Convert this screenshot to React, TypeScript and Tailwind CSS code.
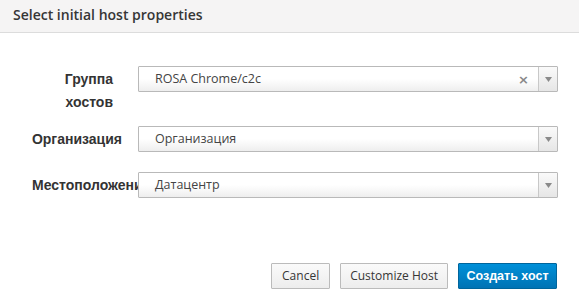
import React from 'react';

const Arrow = () => (
  <div className="flex h-full w-[19px] items-center justify-center border-l border-[#c8c8c8] bg-gradient-to-b from-[#fafafa] to-[#e6e6e6]">
    <svg width="7" height="5" viewBox="0 0 7 5">
      <path d="M0 0 L7 0 L3.5 5 Z" fill="#8a8a8a" />
    </svg>
  </div>
);

const Select = ({ value, clearable }: { value: string; clearable?: boolean }) => (
  <div className="flex h-[26px] w-[420px] shrink-0 items-center rounded-[1px] border border-[#b9b9b9] bg-gradient-to-b from-white via-white to-[#eeeeee]">
    <span className="flex-1 pl-4 text-[12.5px] text-[#444] font-['Open_Sans',sans-serif]">{value}</span>
    {clearable && (
      <span className="mr-[9px] text-[13px] font-bold leading-none text-[#888] font-['DejaVu_Sans',sans-serif]">×</span>
    )}
    <Arrow />
  </div>
);

const App = () => {
  return (
    <div className="h-[302px] w-[579px] bg-white font-['Liberation_Sans',Arial,sans-serif]">
      <div className="flex h-[33px] items-center border-b border-[#dcdcdc] bg-[#f5f4f4] px-[13px] pb-[3px]">
        <h2 className="text-[14px] font-semibold text-[#363636] font-['Open_Sans',sans-serif]">Select initial host properties</h2>
      </div>

      <div className="flex flex-col pt-[33px]">
        <div className="flex items-start">
          <label className="w-[138px] shrink-0 pr-[25px] pt-[2px] text-right text-[14px] font-bold leading-[23px] text-[#333]">
            Группа<br />хостов
          </label>
          <Select value="ROSA Chrome/c2c" clearable />
        </div>
        <div className="mt-[12px] flex items-center">
          <label className="w-[138px] shrink-0 pr-[16px] text-right text-[14px] font-bold text-[#333]">Организация</label>
          <Select value="Организация" />
        </div>
        <div className="mt-[20px] flex items-center">
          <label className="w-[138px] shrink-0 overflow-hidden whitespace-nowrap pl-[32px] text-left text-[14px] font-bold text-[#333]">Местоположение</label>
          <Select value="Датацентр" />
        </div>
      </div>

      <div className="mt-[65px] flex justify-end gap-[10px] pr-[22px]">
        <button className="h-[26px] rounded-[1px] border border-[#bbbbbb] bg-gradient-to-b from-[#fafafa] to-[#ededed] px-[10px] text-[12px] text-[#363636] font-['Open_Sans',sans-serif]">
          Cancel
        </button>
        <button className="h-[26px] rounded-[1px] border border-[#bbbbbb] bg-gradient-to-b from-[#fafafa] to-[#ededed] px-[9px] text-[12px] text-[#363636] font-['Open_Sans',sans-serif]">
          Customize Host
        </button>
        <button className="h-[26px] w-[99px] rounded-[1px] border border-[#00659c] bg-gradient-to-b from-[#0090d9] to-[#0073b4] text-[12.5px] font-bold text-white">
          Создать хост
        </button>
      </div>
    </div>
  );
};

export default App;
